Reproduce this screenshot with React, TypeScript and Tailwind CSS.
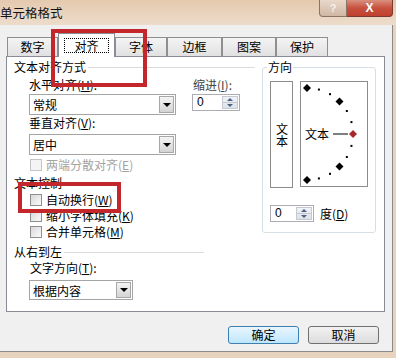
import React from "react";

const Tri = ({ up = false, color = "border-t-black" }: { up?: boolean; color?: string }) =>
  up ? (
    <div className="w-0 h-0 border-l-[3px] border-r-[3px] border-b-[3px] border-l-transparent border-r-transparent border-b-[#4a6286]" />
  ) : (
    <div className={"w-0 h-0 border-l-[4px] border-r-[4px] border-t-[4px] border-l-transparent border-r-transparent " + color} />
  );

function Select({ text, cls }: { text: string; cls: string }) {
  return (
    <div className={"flex border border-[#a5a5a5] bg-white " + cls}>
      <div className="flex-1 pl-[3px] text-[12px] leading-[19px] text-black">{text}</div>
      <div className="w-[15px] my-[1px] mr-[1px] border border-[#a7a7a7] bg-gradient-to-b from-[#f4f4f4] to-[#d4d4d4] flex items-center justify-center">
        <Tri />
      </div>
    </div>
  );
}

function Spinner({ cls }: { cls: string }) {
  return (
    <div className={"flex border border-[#abadb3] bg-white " + cls}>
      <div className="flex-1 pl-[4px] text-[12px] leading-[15px] font-['Liberation_Sans']">0</div>
      <div className="w-[16px] my-[1px] mr-[1px] flex flex-col border border-[#c5cad2] bg-gradient-to-b from-[#f1f3f6] to-[#dde2e8]">
        <div className="flex-1 flex items-center justify-center border-b border-[#c5cad2]">
          <Tri up />
        </div>
        <div className="flex-1 flex items-center justify-center">
          <div className="w-0 h-0 border-l-[3px] border-r-[3px] border-t-[3px] border-l-transparent border-r-transparent border-t-[#4a6286]" />
        </div>
      </div>
    </div>
  );
}

function Check({ children, disabled = false, cls = "" }: { children: React.ReactNode; disabled?: boolean; cls?: string }) {
  return (
    <div className={"flex items-center h-[14px] " + cls}>
      <div
        className={
          "w-[12px] h-[12px] border " +
          (disabled ? "border-[#c4c4c4] bg-[#f4f4f4]" : "border-[#8e8f8f] bg-gradient-to-br from-[#d8d8d8] to-[#fbfbfb]")
        }
      />
      <span className={"ml-[4px] text-[12px] leading-[14px] " + (disabled ? "text-[#a3a3a3]" : "text-black")}>{children}</span>
    </div>
  );
}

const Tab = ({ label, w, sel = false }: { label: string; w: string; sel?: boolean }) =>
  sel ? (
    <div className={"relative z-10 -mb-px h-[24px] border border-b-0 border-[#898c95] bg-white flex items-center justify-center " + w}>
      <span className="border border-dotted border-black px-[9px] leading-[13px] text-[12px]">{label}</span>
    </div>
  ) : (
    <div className={"h-[19px] border border-b-0 border-[#8e8f8f] bg-gradient-to-b from-[#f4f4f4] to-[#e1e1e1] flex items-center justify-center text-[12px] leading-[14px] " + w}>
      {label}
    </div>
  );

export default function App() {
  const pts: { x: number; y: number; big: boolean; red?: boolean }[] = [];
  for (let a = 90; a >= -90; a -= 15) {
    const r = (a * Math.PI) / 180;
    pts.push({ x: 7 + 46 * Math.cos(r), y: 53 - 46 * Math.sin(r), big: a % 45 === 0, red: a === 0 });
  }
  return (
    <div className="relative w-[396px] h-[358px] overflow-hidden bg-[#e8d3bf] font-['Noto_Sans_CJK_SC','Noto_Sans',sans-serif] text-black">
      {/* title bar */}
      <div className="h-[25px] flex items-start bg-gradient-to-b from-[#e4c9ae] to-[#eddccb]">
        <div className="mt-[5px] text-[12.5px] leading-[15px] text-[#111]">单元格格式</div>
        <div className="ml-auto mr-[3px] flex h-[17px]">
          <div className="w-[28px] h-full border border-t-0 border-[#8a7565] rounded-bl-[4px] bg-gradient-to-b from-[#e9d8ca] to-[#cfb7a4] flex items-center justify-center text-[11px] leading-[11px] font-bold text-[#f5f0ea] font-['Liberation_Sans']">
            ?
          </div>
          <div className="w-[46px] h-full border border-t-0 border-l-0 border-[#7b3a2d] rounded-br-[4px] bg-gradient-to-b from-[#d98f7f] via-[#c8503e] to-[#c0402e] flex items-center justify-center text-[12px] leading-[12px] font-bold text-white font-['Liberation_Sans']">
            X
          </div>
        </div>
      </div>

      {/* body */}
      <div className="w-[393px] h-[327px] bg-[#f0f0f0] border-r border-b border-[#8b8b8b] flex flex-col">
        {/* tabs */}
        <div className="h-[31px] pl-[7px] flex items-end">
          <Tab label="数字" w="w-[51px]" />
          <Tab label="对齐" w="w-[57px]" sel />
          <Tab label="字体" w="w-[52px]" />
          <Tab label="边框" w="w-[55px]" />
          <Tab label="图案" w="w-[54px]" />
          <Tab label="保护" w="w-[52px]" />
        </div>

        {/* panel */}
        <div className="ml-[6px] w-[379px] h-[256px] border border-[#898c95] bg-white flex">
          {/* left column */}
          <div className="w-[255px] pl-[7px] pt-[3px] flex flex-col">
            <div className="w-[241px] h-[14px] flex items-center">
              <span className="text-[12px] leading-[14px]">文本对齐方式</span>
              <div className="flex-1 h-px bg-[#dcdcdc] ml-[2px]" />
            </div>
            <div className="flex mt-[4px]">
              <div className="ml-[15px] w-[147px] flex flex-col">
                <div className="text-[12px] leading-[14px]">
                  水平对齐(<u>H</u>):
                </div>
                <Select text="常规" cls="mt-[2px] w-[147px] h-[21px]" />
                <div className="mt-[1px] text-[12px] leading-[14px]">
                  垂直对齐(<u>V</u>):
                </div>
                <Select text="居中" cls="mt-[4px] w-[147px] h-[21px]" />
                <Check disabled cls="mt-[3px] ml-[1px]">
                  两端分散对齐(<u>E</u>)
                </Check>
              </div>
              <div className="ml-[16px] flex flex-col">
                <div className="ml-[1px] text-[12px] leading-[14px] text-[#444]">
                  缩进(<u>I</u>):
                </div>
                <Spinner cls="mt-[2px] w-[48px] h-[17px]" />
              </div>
            </div>
            <div className="mt-[4px] text-[12px] leading-[14px]">文本控制</div>
            <Check cls="mt-[3px] ml-[16px]">
              自动换行(<u>W</u>)
            </Check>
            <Check cls="mt-[2px] ml-[16px]">
              缩小字体填充(<u>K</u>)
            </Check>
            <Check cls="mt-[2px] ml-[16px]">
              合并单元格(<u>M</u>)
            </Check>
            <div className="mt-[6px] w-[190px] h-[14px] flex items-center">
              <span className="text-[12px] leading-[14px]">从右到左</span>
              <div className="flex-1 h-px bg-[#dcdcdc] ml-[2px]" />
            </div>
            <div className="mt-[2px] ml-[16px] text-[12px] leading-[14px]">
              文字方向(<u>T</u>):
            </div>
            <Select text="根据内容" cls="mt-[5px] ml-[15px] w-[104px] h-[20px]" />
          </div>

          {/* orientation group */}
          <div className="relative mt-[10px] w-[114px] h-[166px] border border-[#d5dfe5] rounded-[3px] flex flex-col">
            <div className="absolute left-[4px] top-[-8px] bg-white px-[1px] text-[12px] leading-[14px]">方向</div>
            <div className="flex mt-[13px] ml-[7px]">
              <div className="w-[23px] h-[107px] border border-[#8c8c8c] flex items-center justify-center">
                <span className="[writing-mode:vertical-rl] [text-orientation:upright] text-[12px] leading-[14px]">文本</span>
              </div>
              <div className="relative ml-[7px] w-[68px] h-[106px] border border-[#8c8c8c]">
                <svg className="absolute left-0 top-0" width="66" height="104" viewBox="1 1 66 104">
                  <line x1="33" y1="53" x2="48" y2="53" stroke="#000" strokeWidth="1" />
                  {pts.map((p, i) =>
                    p.big ? (
                      <polygon
                        key={i}
                        points={`${p.x},${p.y - 4} ${p.x + 4},${p.y} ${p.x},${p.y + 4} ${p.x - 4},${p.y}`}
                        fill={p.red ? "#a52a2a" : "#000"}
                      />
                    ) : (
                      <rect key={i} x={p.x - 1} y={p.y - 1} width="2" height="2" fill="#000" />
                    )
                  )}
                </svg>
                <span className="absolute left-[4px] top-[45px] text-[12px] leading-[14px]">文本</span>
              </div>
            </div>
            <div className="flex items-center mt-[17px] ml-[7px]">
              <Spinner cls="w-[44px] h-[17px]" />
              <span className="ml-[6px] text-[12px] leading-[14px]">
                度(<u>D</u>)
              </span>
            </div>
          </div>
        </div>

        {/* buttons */}
        <div className="mt-[14px] ml-[228px] flex gap-[9px]">
          <div className="w-[71px] h-[18px] rounded-[3px] border border-[#3c7fb1] bg-gradient-to-b from-[#eaf6fd] to-[#bee6fd] flex items-center justify-center text-[12px] leading-[14px]">
            确定
          </div>
          <div className="w-[71px] h-[18px] rounded-[3px] border border-[#707070] bg-gradient-to-b from-[#f2f2f2] to-[#dcdcdc] flex items-center justify-center text-[12px] leading-[14px]">
            取消
          </div>
        </div>
      </div>

      {/* red annotation boxes */}
      <div className="absolute left-[51px] top-[29px] w-[96px] h-[58px] border-[4px] border-[#c3262b]" />
      <div className="absolute left-[18px] top-[182px] w-[103px] h-[31px] border-[4px] border-[#c3262b]" />
    </div>
  );
}
